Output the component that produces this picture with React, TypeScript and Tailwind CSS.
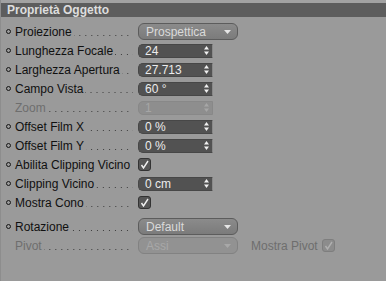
import React from 'react';

type RowProps = {
  label: string;
  bullet?: boolean;
  disabled?: boolean;
  children?: React.ReactNode;
};

const Row: React.FC<RowProps> = ({ label, bullet = true, disabled = false, children }) => {
  return (
    <div className="flex h-[19px] items-center">
      <div className="flex w-[14px] shrink-0 items-center pl-[5px]">
        {bullet && <div className="h-[5px] w-[5px] rounded-full border border-[#151515]"></div>}
      </div>
      <div className="flex h-full w-[118px] shrink-0 items-center">
        <span className={`whitespace-nowrap text-[12px] leading-none ${disabled ? 'text-[#6e6e6e]' : 'text-[#101010]'}`}>
          {label}
        </span>
        <div className="mb-[5px] ml-[2px] h-px flex-1 self-end bg-[linear-gradient(to_right,#3c3c3c_1px,transparent_1px)] bg-[length:6px_1px] bg-right bg-repeat-x"></div>
      </div>
      <div className="ml-[5px] flex items-center">{children}</div>
    </div>
  );
};

const Spinner: React.FC<{ color: string }> = ({ color }) => (
  <svg width="5" height="9" viewBox="0 0 5 9" fill={color}>
    <polygon points="2.5,0 5,3.5 0,3.5" />
    <polygon points="0,5.5 5,5.5 2.5,9" />
  </svg>
);

const NumField: React.FC<{ value: string; disabled?: boolean }> = ({ value, disabled = false }) => (
  <div
    className={`flex h-[14px] w-[75px] items-center justify-between rounded-l-[5px] pl-[6px] pr-[3px] ${
      disabled
        ? 'bg-[#8e8e8e] border border-[#888] text-[#a6a6a6]'
        : 'bg-[#525252] border border-[#474747] border-r-[#8a8a8a] text-[#ececec]'
    }`}
  >
    <span className="text-[12px] leading-none">{value}</span>
    <Spinner color={disabled ? '#a6a6a6' : '#f0f0f0'} />
  </div>
);

const Dropdown: React.FC<{ value: string; disabled?: boolean }> = ({ value, disabled = false }) => (
  <div
    className={`flex h-[17px] w-[100px] items-center justify-between rounded-[6px] border pl-[7px] pr-[6px] ${
      disabled
        ? 'border-[#828282] bg-[#929292] text-[#a8a8a8]'
        : 'border-[#5c5c5c] bg-[linear-gradient(#8b8b8b,#7b7b7b)] text-[#dadada]'
    }`}
  >
    <span className="text-[12px] leading-none">{value}</span>
    <svg width="7" height="4" viewBox="0 0 7 4" fill={disabled ? '#a8a8a8' : '#e6e6e6'}>
      <polygon points="0,0 7,0 3.5,4" />
    </svg>
  </div>
);

const Check: React.FC<{ disabled?: boolean }> = ({ disabled = false }) => (
  <div
    className={`flex h-[13px] w-[13px] items-center justify-center rounded-[3px] border ${
      disabled ? 'border-[#7e7e7e] bg-[#8c8c8c]' : 'border-[#333] bg-[#575757]'
    }`}
  >
    <svg width="9" height="9" viewBox="0 0 9 9" fill="none" stroke={disabled ? '#b0b0b0' : '#f2f2f2'} strokeWidth="1.4">
      <polyline points="1.5,5 3.5,8 8,1" />
    </svg>
  </div>
);

export default function App() {
  return (
    <div
      className="h-[281px] w-[386px] overflow-hidden border-l border-[#8d8d8d] bg-[#9a9a9a] pt-[3px]"
      style={{ fontFamily: '"Liberation Sans", Arial, sans-serif' }}
    >
      <div className="-mt-[3px] h-[3px] bg-[#a2a2a2]"></div>
      <div className="flex h-[14px] items-center bg-[#5d5d5d] pl-[6px]">
        <span className="text-[12px] font-bold leading-none text-[#dedede]">Proprietà Oggetto</span>
      </div>
      <div className="pt-[5px]">
        <Row label="Proiezione">
          <Dropdown value="Prospettica" />
        </Row>
        <Row label="Lunghezza Focale">
          <NumField value="24" />
        </Row>
        <Row label="Larghezza Apertura">
          <NumField value="27.713" />
        </Row>
        <Row label="Campo Vista">
          <NumField value="60 °" />
        </Row>
        <Row label="Zoom" bullet={false} disabled>
          <NumField value="1" disabled />
        </Row>
        <Row label="Offset Film X">
          <NumField value="0 %" />
        </Row>
        <Row label="Offset Film Y">
          <NumField value="0 %" />
        </Row>
        <Row label="Abilita Clipping Vicino">
          <Check />
        </Row>
        <Row label="Clipping Vicino">
          <NumField value="0 cm" />
        </Row>
        <Row label="Mostra Cono">
          <Check />
        </Row>
        <div className="h-[5px]"></div>
        <Row label="Rotazione">
          <Dropdown value="Default" />
        </Row>
        <Row label="Pivot" bullet={false} disabled>
          <Dropdown value="Assi" disabled />
          <span className="ml-[13px] text-[12px] leading-none text-[#6e6e6e]">Mostra Pivot</span>
          <div className="ml-[4px]">
            <Check disabled />
          </div>
        </Row>
      </div>
    </div>
  );
}
